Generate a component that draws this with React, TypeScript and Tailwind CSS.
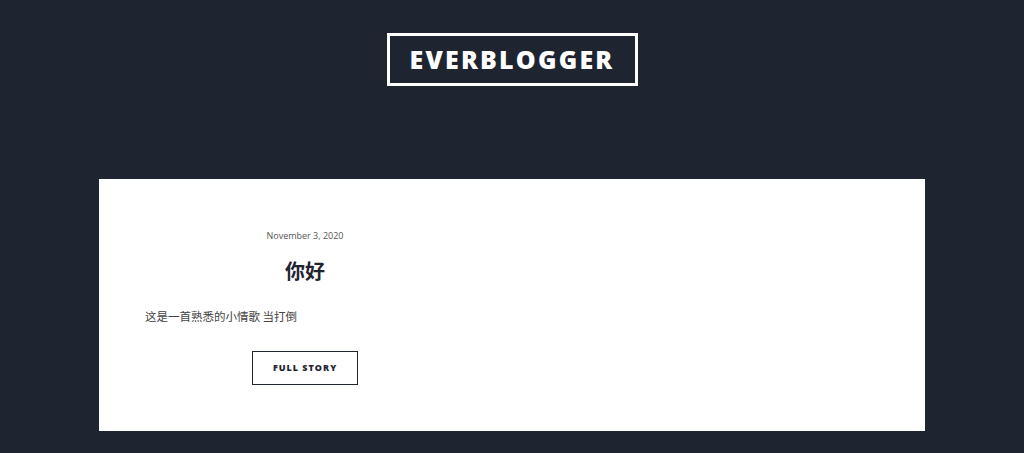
export default function App() {
  return (
    <div
      className="min-h-[453px] bg-[#1e2530] flex flex-col items-center"
      style={{ fontFamily: '"Open Sans", "Noto Sans", "Noto Sans CJK SC", sans-serif' }}
    >
      <header className="pt-[33px] pb-[93px]">
        <div className="border-[3px] border-white w-[251px] h-[53px] flex items-center justify-center">
          <span className="text-white font-extrabold text-[25px] tracking-[2.2px] leading-none">EVERBLOGGER</span>
        </div>
      </header>

      <main className="w-[826px] h-[252px] bg-white pl-[46px] pt-[51px]">
        <article className="w-[320px] flex flex-col">
          <div className="text-center text-[9px] text-[#555] leading-[12px]">November 3, 2020</div>
          <h2
            className="text-center text-[20px] font-bold text-[#1e2530] leading-[28px] mt-[15px]"
            style={{ fontFamily: '"Noto Sans CJK SC", sans-serif' }}
          >
            你好
          </h2>
          <p
            className="text-[11.5px] text-[#444] leading-[18px] mt-[22px]"
            style={{ fontFamily: '"Noto Sans CJK SC", sans-serif' }}
          >
            这是一首熟悉的小情歌 当打倒
          </p>
          <div className="flex justify-center mt-[26px]">
            <button className="w-[106px] h-[34px] border border-[#1e2530] text-[9px] font-extrabold tracking-[1px] text-[#1e2530]">
              FULL STORY
            </button>
          </div>
        </article>
      </main>
    </div>
  );
}
